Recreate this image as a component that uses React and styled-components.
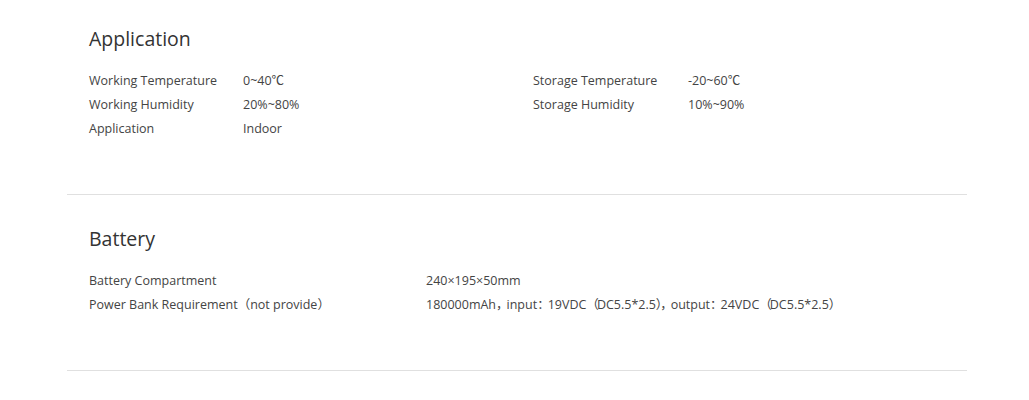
import React from "react";
import styled, { createGlobalStyle } from "styled-components";

const GlobalStyle = createGlobalStyle`
  body {
    margin: 0;
    background: #fff;
    font-family: "Open Sans", "Noto Sans CJK SC", sans-serif;
    color: #333;
  }
`;

const Page = styled.div`
  width: 900px;
  margin-left: 67px;
`;

const Section = styled.section`
  padding: 30px 22px 53px;
  border-bottom: 1px solid #e0e0e0;

  &:first-child {
    padding-top: 25px;
  }
`;

const Title = styled.h2`
  margin: 0 0 16px;
  font-size: 19.5px;
  line-height: 28px;
  font-weight: 400;
  color: #333;
`;

const Grid = styled.div`
  display: grid;
  grid-template-columns: ${props => props.cols || "1fr"};
`;

const Column = styled.div`
  display: flex;
  flex-direction: column;
`;

const Row = styled.div`
  display: flex;
  font-size: 12.5px;
  line-height: 24px;
  color: #444;
`;

const Label = styled.span`
  flex: 0 0 ${props => props.width}px;
`;

const Value = styled.span`
  white-space: nowrap;
`;

const Punct = styled.span`
  letter-spacing: -2px;
`;

const SpecRow = ({ label, value, labelWidth }) => (
  <Row>
    <Label width={labelWidth}>{label}</Label>
    <Value>{value}</Value>
  </Row>
);

const App = () => (
  <>
    <GlobalStyle />
    <Page>
      <Section>
        <Title>Application</Title>
        <Grid cols="444px 1fr">
          <Column>
            <SpecRow labelWidth={154} label="Working Temperature" value="0~40℃" />
            <SpecRow labelWidth={154} label="Working Humidity" value="20%~80%" />
            <SpecRow labelWidth={154} label="Application" value="Indoor" />
          </Column>
          <Column>
            <SpecRow labelWidth={155} label="Storage Temperature" value="-20~60℃" />
            <SpecRow labelWidth={155} label="Storage Humidity" value="10%~90%" />
          </Column>
        </Grid>
      </Section>
      <Section>
        <Title>Battery</Title>
        <Column>
          <SpecRow labelWidth={337} label="Battery Compartment" value="240×195×50mm" />
          <SpecRow
            labelWidth={337}
            label="Power Bank Requirement（not provide）"
            value={
              <>
                180000mAh<Punct>，</Punct>input<Punct>：</Punct>19VDC<Punct>（</Punct>DC5.5*2.5<Punct>）</Punct>
                <Punct>，</Punct>output<Punct>：</Punct>24VDC<Punct>（</Punct>DC5.5*2.5<Punct>）</Punct>
              </>
            }
          />
        </Column>
      </Section>
    </Page>
  </>
);

export default App;
